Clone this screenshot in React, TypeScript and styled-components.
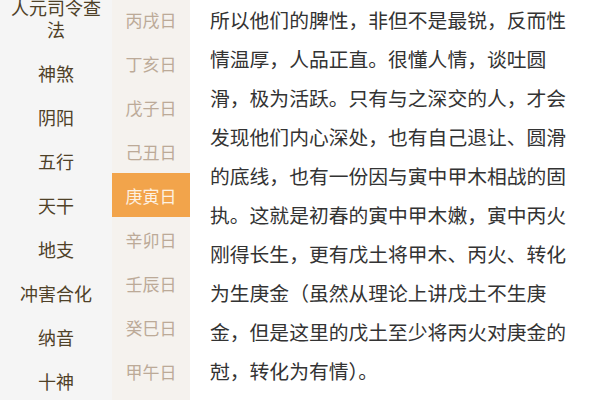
import styled, { createGlobalStyle, css } from 'styled-components';

const GlobalStyle = createGlobalStyle`
  html, body {
    margin: 0;
    padding: 0;
    background: #ffffff;
  }
  body {
    font-family: "Noto Sans CJK SC", "Noto Sans", sans-serif;
  }
`;

/* ================================================================
   Data
   ================================================================ */

const CATEGORIES = ['人元司令查法', '神煞', '阴阳', '五行', '天干', '地支', '冲害合化', '纳音', '十神'];

const DAYS = ['丙戌日', '丁亥日', '戊子日', '己丑日', '庚寅日', '辛卯日', '壬辰日', '癸巳日', '甲午日'];

const LINES = [
  '所以他们的脾性，非但不是最锐，反而性',
  '情温厚，人品正直。很懂人情，谈吐圆',
  '滑，极为活跃。只有与之深交的人，才会',
  '发现他们内心深处，也有自己退让、圆滑',
  '的底线，也有一份因与寅中甲木相战的固',
  '执。这就是初春的寅中甲木嫩，寅中丙火',
  '刚得长生，更有戊土将甲木、丙火、转化',
  '为生庚金（虽然从理论上讲戊土不生庚',
  '金，但是这里的戊土至少将丙火对庚金的',
  '尅，转化为有情）。',
];

/* ================================================================
   Styles
   ================================================================ */

const Page = styled.div`
  display: flex;
  width: 600px;
  height: 400px;
  overflow: hidden;
  background: #ffffff;
`;

const SideNav = styled.nav`
  width: 112px;
  flex-shrink: 0;
  background: #f5f5f5;
  overflow: hidden;
`;

const SideList = styled.ul`
  list-style: none;
  margin: -15px 0 0;
  padding: 0;
`;

const SideItem = styled.li`
  padding: 11px 8px;
  font-size: 18px;
  line-height: 22px;
  color: #4f4128;
  text-align: center;
`;

const DayNav = styled.nav`
  width: 78px;
  flex-shrink: 0;
  background: #f5f2ee;
  overflow: hidden;
`;

const DayList = styled.ul`
  list-style: none;
  margin: -3px 0 0;
  padding: 0;
`;

const DayItem = styled.li<{ $active: boolean }>`
  height: 44px;
  display: flex;
  align-items: center;
  justify-content: center;
  font-size: 17px;
  color: #bcaa98;

  ${({ $active }) =>
    $active &&
    css`
      background: #f2a44b;
      color: #fdf1e2;
    `}
`;

const Article = styled.article`
  flex: 1;
  padding: 0 0 0 20px;
  overflow: hidden;
`;

const Line = styled.p`
  margin: 0;
  font-size: 19.8px;
  line-height: 39px;
  color: #333333;
  white-space: nowrap;
`;

/* ================================================================
   Component
   ================================================================ */

export default function App() {
  const active = '庚寅日';

  return (
    <>
      <GlobalStyle />
      <Page>
        <SideNav>
          <SideList>
            {CATEGORIES.map((c) => (
              <SideItem key={c}>{c}</SideItem>
            ))}
          </SideList>
        </SideNav>

        <DayNav>
          <DayList>
            {DAYS.map((d) => (
              <DayItem key={d} $active={d === active}>
                {d}
              </DayItem>
            ))}
          </DayList>
        </DayNav>

        <Article>
          {LINES.map((l, i) => (
            <Line key={i}>{l}</Line>
          ))}
        </Article>
      </Page>
    </>
  );
}
